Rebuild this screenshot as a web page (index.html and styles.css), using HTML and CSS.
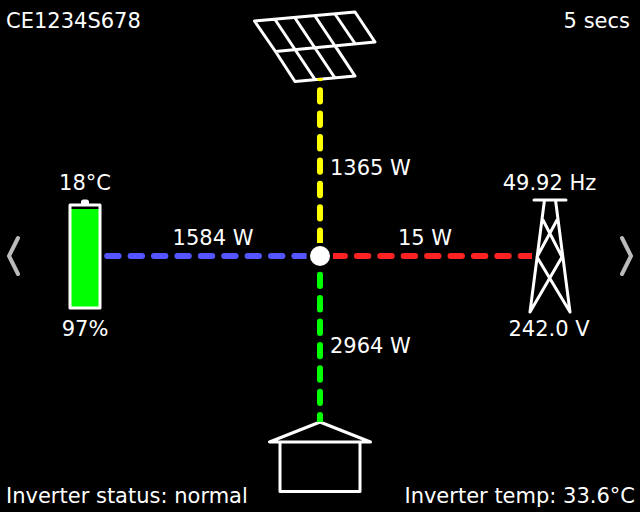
FILE: index.html
```html
<!DOCTYPE html>
<html lang="en">
<head>
<meta charset="utf-8">
<title>Inverter power flow</title>
<link rel="stylesheet" href="styles.css">
</head>
<body>
<main class="screen">
  <svg class="diagram" width="640" height="512" viewBox="0 0 640 512" aria-label="Power flow diagram">
    <defs>
      <clipPath id="clip-solar"><rect x="310" y="78" width="20" height="165"/></clipPath>
      <clipPath id="clip-battery"><rect x="104" y="246" width="202.6" height="20"/></clipPath>
      <clipPath id="clip-grid"><rect x="333" y="246" width="199" height="20"/></clipPath>
      <clipPath id="clip-home"><rect x="310" y="268" width="20" height="154"/></clipPath>
    </defs>

    <path class="icon" d="M254.500 21 355 12 375 42 275.500 51.500ZM275.500 51.500 295 81.500 355 76 335 45.500M275 19.500 315 79.500M295 18 335 78M315 16 355 76M335 14 355 43.500"/>
    <path class="icon" d="M269.500 442H370.500L320 422ZM280 442V491.500H360V442"/>

    <g clip-path="url(#clip-solar)"><line class="flow flow-solar" x1="320" y1="66.800" x2="320" y2="250"/></g>
    <g clip-path="url(#clip-battery)"><line class="flow flow-battery" x1="107.200" y1="256" x2="310" y2="256"/></g>
    <g clip-path="url(#clip-grid)"><line class="flow flow-grid" x1="333.500" y1="256" x2="535" y2="256"/></g>
    <g clip-path="url(#clip-home)"><line class="flow flow-home" x1="320" y1="274.700" x2="320" y2="425"/></g>
    <circle class="hub" cx="320" cy="256" r="10"/>

    <path class="nub" d="M81 204v-2.500a2.500 2.500 0 0 1 2.500-2h3a2.500 2.500 0 0 1 2.500 2v2.500Z"/>
    <rect class="battery-fill" x="71" y="209" width="28" height="98"/>
    <rect class="icon" x="70" y="205" width="30" height="103"/>

    <path class="icon" d="M534 200H566M544.500 200 530 312M555.500 200 570 312M543 220 562 257 530 312M557 220 537 257 570 312"/>

    <path class="chevron" d="M18 238 9 256 18 274"/>
    <path class="chevron" d="M622 238 631 256 622 274"/>

    <text class="label middle" x="85" y="190">18°C</text>
    <text class="label middle" x="85" y="336">97%</text>
    <text class="label middle" x="213" y="245">1584 W</text>
    <text class="label" x="330" y="175">1365 W</text>
    <text class="label middle" x="425" y="245">15 W</text>
    <text class="label" x="330" y="353">2964 W</text>
    <text class="label middle" x="549.500" y="190">49.92 Hz</text>
    <text class="label middle" x="549" y="336">242.0 V</text>
  </svg>

  <header class="bar bar-top">
    <span>CE1234S678</span>
    <span>5 secs</span>
  </header>
  <footer class="bar bar-bottom">
    <span>Inverter status: normal</span>
    <span>Inverter temp: 33.6°C</span>
  </footer>
</main>
</body>
</html>
```

FILE: styles.css
```css
html, body {
  margin: 0;
  padding: 0;
  background: #000;
}

.screen {
  position: relative;
  display: flex;
  flex-direction: column;
  justify-content: space-between;
  width: 640px;
  height: 512px;
  overflow: hidden;
  color: #fff;
  font-family: "DejaVu Sans", sans-serif;
  font-size: 21px;
  line-height: 24px;
}

.diagram {
  position: absolute;
  top: 0;
  left: 0;
}

.bar {
  position: relative;
  display: flex;
  justify-content: space-between;
}

.bar-top {
  padding: 9px 10px 0 6px;
}

.bar-bottom {
  padding: 0 5px 4px 6px;
}

.flow {
  fill: none;
  stroke-width: 6;
  stroke-linecap: round;
  stroke-dasharray: 11.4 12;
}

.flow-solar { stroke: #ffff00; }
.flow-battery { stroke: #5555ff; }
.flow-grid { stroke: #ff2222; }
.flow-home { stroke: #00ff00; }

.hub { fill: #fff; }
.nub { fill: #fff; }
.battery-fill { fill: #00ff00; }

.icon {
  fill: none;
  stroke: #fff;
  stroke-width: 3;
  stroke-linecap: round;
  stroke-linejoin: round;
}

.chevron {
  fill: none;
  stroke: #bbbbbb;
  stroke-width: 4;
  stroke-linecap: round;
  stroke-linejoin: miter;
}

.label {
  fill: #fff;
  font-family: "DejaVu Sans", sans-serif;
  font-size: 21px;
}

.middle {
  text-anchor: middle;
}
```
